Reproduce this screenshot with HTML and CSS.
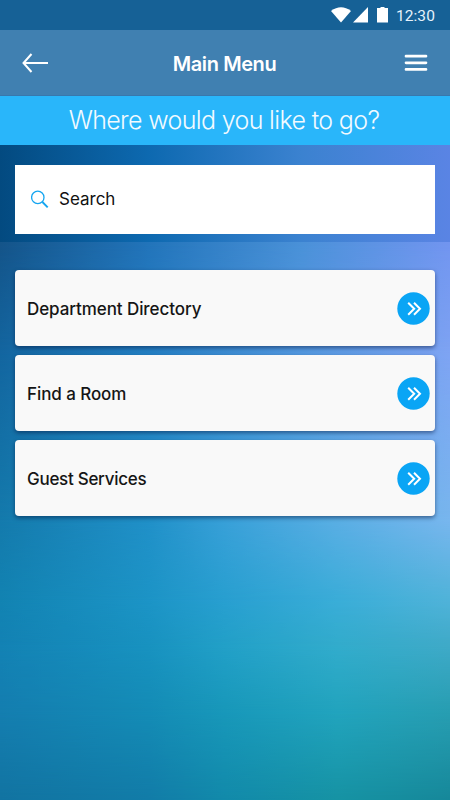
FILE: index.html
```
<!DOCTYPE html>
<html lang="en">
<head>
  <meta charset="UTF-8" />
  <meta name="viewport" content="width=device-width, initial-scale=1" />
  <title>Main Menu</title>
  <link rel="stylesheet" href="styles.css">
</head>
<body>

  <div class="backdrop">
    <div class="glow glow-6"></div>
    <div class="glow glow-5"></div>
    <div class="glow glow-4"></div>
    <div class="glow glow-3"></div>
    <div class="glow glow-2"></div>
    <div class="glow glow-1"></div>
  </div>

  <div class="status-bar">
    <svg class="status-icons" width="60" height="18" viewBox="0 0 60 18">
      <path d="M0 5Q10 -2.5 20 5L10 16.500Z" fill="#fff"/>
      <path d="M37 1V16.500H22Z" fill="#fff"/>
      <path d="M46 2h3.500V1h4v1H57v14.500H46Z" fill="#fff"/>
    </svg>
    <span class="time">12:30</span>
  </div>

  <header class="nav">
    <button class="nav-button" aria-label="Back">
      <svg width="26" height="20" viewBox="0 0 26 20">
        <path d="M9.5 1L1.5 10L9.5 19M1.5 10H26" fill="none" stroke="#fff" stroke-width="2"/>
      </svg>
    </button>
    <h1>Main Menu</h1>
    <button class="nav-button" aria-label="Menu">
      <svg width="24" height="18" viewBox="0 0 24 18">
        <path d="M2 2.2H22M2 8.8H22M2 15.4H22" stroke="#fff" stroke-width="2.7" stroke-linecap="round"/>
      </svg>
    </button>
  </header>

  <h2>Where would you like to go?</h2>

  <div class="search-area">
    <label class="search-box">
      <svg width="18" height="18" viewBox="0 0 18 18">
        <circle cx="6.8" cy="7.4" r="6.2" fill="none" stroke="#14a5f0" stroke-width="1.3"/>
        <path d="M11.4 12L16.700 17.3" stroke="#14a5f0" stroke-width="1.9"/>
      </svg>
      <input type="text" placeholder="Search">
    </label>
  </div>

  <main class="menu">
    <a class="menu-item">
      <span>Department Directory</span>
      <svg width="33" height="33" viewBox="0 0 33 33">
        <circle cx="16.5" cy="16.5" r="16.2" fill="#0aa5f5"/>
        <path d="M11.2 10.8L17.2 16.8L11.2 22.8M17 10.8L23 16.8L17 22.8" fill="none" stroke="#fff" stroke-width="2"/>
      </svg>
    </a>
    <a class="menu-item">
      <span>Find a Room</span>
      <svg width="33" height="33" viewBox="0 0 33 33">
        <circle cx="16.5" cy="16.5" r="16.2" fill="#0aa5f5"/>
        <path d="M11.2 10.8L17.2 16.8L11.2 22.8M17 10.8L23 16.8L17 22.8" fill="none" stroke="#fff" stroke-width="2"/>
      </svg>
    </a>
    <a class="menu-item">
      <span class="tight">Guest Services</span>
      <svg width="33" height="33" viewBox="0 0 33 33">
        <circle cx="16.5" cy="16.5" r="16.2" fill="#0aa5f5"/>
        <path d="M11.2 10.8L17.2 16.8L11.2 22.8M17 10.8L23 16.8L17 22.8" fill="none" stroke="#fff" stroke-width="2"/>
      </svg>
    </a>
  </main>

</body>
</html>
```
FILE: styles.css
```
* {
  box-sizing: border-box;
}

body {
  font-family: Inter, 'Liberation Sans', sans-serif;
  margin: 0;
  height: 800px;
  position: relative;
  overflow: hidden;
}

/* each glow fades downwards into the one below it */
.backdrop {
  position: absolute;
  inset: 0;
  z-index: -1;
  background: linear-gradient(to right, #1274a2, #127ca8 33%, #128aaa 50%, #1693a4 75%, #16889a);
}

.glow {
  position: absolute;
  inset: 0;
}

.glow-1 {
  background: linear-gradient(to right, #145489, #2274ba 33%, #4a91d8 67%, #7295f0);
  mask-image: linear-gradient(to bottom, #000 245px, transparent 350px);
}

.glow-2 {
  background: linear-gradient(to right, #13659f, #2580c4 33%, #5499e0 67%, #7ea3f3);
  mask-image: linear-gradient(to bottom, #000 350px, transparent 520px);
}

.glow-3 {
  background: linear-gradient(to right, #147aac, #2090c8 33%, #38a0d8 50%, #5aaee4 75%, #78b6ee);
  mask-image: linear-gradient(to bottom, #000 520px, transparent 600px);
}

.glow-4 {
  background: linear-gradient(to right, #1283b2, #1c94c6 33%, #289fd0 50%, #3aadd8 75%, #50b3d9);
  mask-image: linear-gradient(to bottom, #000 600px, transparent 645px);
}

.glow-5 {
  background: linear-gradient(to right, #1382b4, #1892c0 33%, #22a0c8 50%, #32accc 75%, #3faac8);
  mask-image: linear-gradient(to bottom, #000 645px, transparent 710px);
}

.glow-6 {
  background: linear-gradient(to right, #147eb0, #148cb6 33%, #1898ba 50%, #22a4be 75%, #289eb2);
  mask-image: linear-gradient(to bottom, #000 710px, transparent 800px);
}

.status-bar {
  height: 30px;
  background: #166196;
  display: flex;
  justify-content: flex-end;
  align-items: center;
  padding-right: 15px;
}

.status-icons {
  margin: 0 5px 0 0;
}

.time {
  font-family: Roboto, sans-serif;
  font-size: 15.5px;
  font-weight: 400;
  letter-spacing: 0.1px;
  line-height: 30px;
  padding-top: 1px;
  color: #e6f2fb;
}

.nav {
  height: 66px;
  background: #4080b1;
  border-bottom: 1px solid #3878ad;
  display: flex;
  justify-content: space-between;
  align-items: center;
  padding: 0 21px 0 22px;
}

.nav-button {
  background: none;
  border: none;
  padding: 0;
  display: flex;
  width: 26px;
  justify-content: center;
}

h1 {
  margin: 0;
  padding: 2px 2px 0 0;
  font-size: 20px;
  font-weight: 600;
  letter-spacing: -0.4px;
  color: #fff;
}

h2 {
  margin: 0;
  height: 49px;
  line-height: 49px;
  padding-right: 2px;
  background: #29b6fa;
  text-align: center;
  font-size: 25px;
  font-weight: 300;
  letter-spacing: -0.65px;
  color: #f2faff;
}

.search-area {
  height: 97px;
  padding: 20px 15px 0;
  background: linear-gradient(to right, #034a80, #0d69b0 33%, #3b82d0 67%, #5a84e4);
}

.search-box {
  display: flex;
  align-items: center;
  height: 69px;
  padding: 0 16px 2px;
  gap: 10px;
  background: #fff;
}

.search-box input {
  flex: 1;
  border: none;
  outline: none;
  padding: 0;
  font-family: inherit;
  font-size: 17px;
}

.search-box input::placeholder {
  color: #111;
}

.menu {
  display: flex;
  flex-direction: column;
  gap: 9px;
  padding: 28px 15px;
}

.menu-item {
  display: flex;
  justify-content: space-between;
  align-items: center;
  height: 76px;
  padding: 0 5.5px 0 12px;
  background: #f9f9f9;
  border-radius: 4px;
  box-shadow: 0 2px 4px rgba(0, 20, 60, 0.5);
  font-size: 17px;
  font-weight: 500;
  letter-spacing: -0.08px;
  color: #151515;
}

.menu-item span {
  padding-top: 2px;
}

.menu-item .tight {
  letter-spacing: -0.28px;
}
```
